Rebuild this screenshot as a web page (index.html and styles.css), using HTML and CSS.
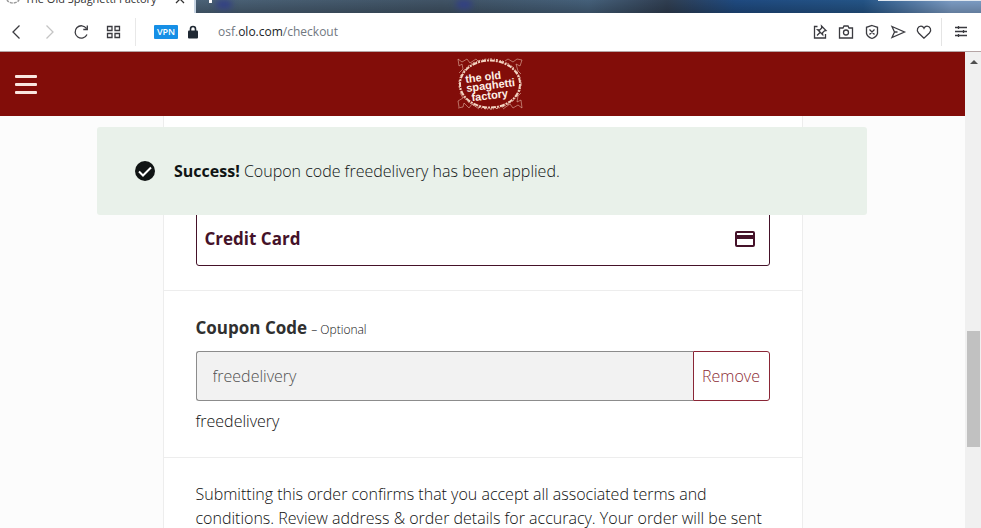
FILE: index.html
```html
<!DOCTYPE html>
<html lang="en">
<head>
<meta charset="utf-8">
<meta name="viewport" content="width=device-width, initial-scale=1">
<title>The Old Spaghetti Factory</title>
<link rel="stylesheet" href="styles.css">
</head>
<body>
<div class="browser">
  <div class="tabs">
    <div class="tab">
      <svg class="tab-icon" width="14" height="10" viewBox="0 0 14 10"><ellipse cx="7" cy="5" rx="6" ry="4" fill="none" stroke="#999" stroke-width="1.500" stroke-dasharray="3 1"/></svg>
      <span class="tab-title">The Old Spaghetti Factory</span>
      <svg class="tab-close" width="10" height="10" viewBox="0 0 10 10"><path d="M1 1l8 8M9 1L1 9" stroke="#333" stroke-width="1.3"/></svg>
    </div>
    <span class="new-tab"></span>
    <span class="shade shade-one"></span>
    <span class="shade shade-two"></span>
    <span class="window-edge"></span>
  </div>
  <div class="toolbar">
    <nav class="nav">
      <button class="tool" type="button" aria-label="Back"><svg width="18" height="18" viewBox="0 0 18 18"><path d="M11.500 2.500L5 9l6.500 6.500" /></svg></button>
      <button class="tool faded" type="button" aria-label="Forward"><svg width="18" height="18" viewBox="0 0 18 18"><path d="M6.500 2.500L13 9l-6.500 6.500"/></svg></button>
      <button class="tool" type="button" aria-label="Reload"><svg width="18" height="18" viewBox="0 0 18 18"><path d="M15 11.500A6.200 6.200 0 1 1 14.500 5.500M15.300 2.500v4h-4"/></svg></button>
      <button class="tool" type="button" aria-label="Speed dial"><svg width="18" height="18" viewBox="0 0 18 18"><path d="M3.500 3.500h4.500v4h-4.500zM11 3.500h4.500v4h-4.500zM3.500 10.500h4.500v4h-4.500zM11 10.500h4.500v4h-4.500z"/></svg></button>
    </nav>
    <div class="address">
      <span class="vpn">VPN</span>
      <svg class="lock" width="12" height="14" viewBox="0 0 12 14"><path d="M3.500 6V4a2.500 2.500 0 0 1 5 0v2" fill="none" stroke="#1f2833" stroke-width="1.600"/><rect x="1" y="5.500" width="10" height="8" rx="1" fill="#1f2833"/></svg>
      <span class="url">osf.<b>olo.com</b>/checkout</span>
    </div>
    <div class="actions">
      <button class="tool" type="button" aria-label="Pin"><svg width="18" height="18" viewBox="0 0 18 18"><path d="M6.500 3.500H3.500v11.500h11v-4M6 12.500l3-3M10.500 3l4.500 4.500-1.500.3-2 2 .2 2-5-5 2 .2 2-2z"/></svg></button>
      <button class="tool" type="button" aria-label="Snapshot"><svg width="18" height="18" viewBox="0 0 18 18"><path d="M2.500 5h3.500l1-2h4l1 2h3.500v10h-13z"/><circle cx="9" cy="9.500" r="2.500"/></svg></button>
      <button class="tool" type="button" aria-label="Ad blocker"><svg width="18" height="18" viewBox="0 0 18 18"><path d="M9 2.500l5.500 1.800v6.200Q13.500 14 9 15.500Q4.500 14 3.500 10.500V4.300zM6.500 6.500l5 5M11.500 6.500l-5 5"/></svg></button>
      <button class="tool" type="button" aria-label="Send"><svg width="18" height="18" viewBox="0 0 18 18"><path d="M3 3.500L15.500 9 3 14.500 5.500 9zM5.500 9h3"/></svg></button>
      <button class="tool" type="button" aria-label="Bookmark"><svg width="18" height="18" viewBox="0 0 18 18"><path d="M9 15.200L3.600 10C0.800 7 3 3.200 6 3.200c1.500 0 2.500 1 3 2 .5-1 1.500-2 3-2 3 0 5.200 3.800 2.400 6.800z"/></svg></button>
      <span class="divider"></span>
      <button class="tool" type="button" aria-label="Easy setup"><svg width="18" height="18" viewBox="0 0 18 18"><path d="M3 4.500h12M3 8.500h12M3 12.500h12M6.500 3v3M11.500 7v3M6.500 11v3"/></svg></button>
    </div>
  </div>
</div>
<div class="viewport">
  <div class="page">
    <header class="header">
      <button class="menu" type="button" aria-label="Menu"><span></span><span></span><span></span></button>
      <svg class="logo" width="68" height="56" viewBox="0 0 68 56" role="img" aria-label="The Old Spaghetti Factory">
        <g fill="none" stroke="#f3d3c0">
          <ellipse cx="34" cy="28" rx="30" ry="23.500" stroke-width="2" stroke-dasharray="5 1 2 1"/>
          <ellipse cx="34" cy="28" rx="31" ry="25" stroke-width="1" stroke-dasharray="2 2 1 1"/>
          <path stroke-width="1" opacity=".5" d="M2 3l4 3 5-3 3 4 6-4 2 2M2 3l1 7 3-2 1 5-4 4M66 4l-5-1-4 3-5-3-3 2M66 4l-2 6-4-2 2 7 3 3M2 52l5-1 1-4 5 5 3-4 7 5M3 51l-1-6 5-3-3-5M66 52l-4-3-5 3-3-4-7 5M66 52l-1-8-4 2 1-6 3-3"/>
        </g>
        <g class="logo-text" transform="rotate(7 34 28)"><text x="10" y="24">the old</text><text x="10" y="33">spaghetti</text><text x="14" y="43">factory</text></g>
      </svg>
    </header>
    <div class="alert" role="status">
      <svg width="20" height="20" viewBox="0 0 20 20"><circle cx="10" cy="10" r="10" fill="#101414"/><path d="M4 10.500l4 4 8-8" fill="none" stroke="#fff" stroke-width="2"/></svg>
      <p><strong>Success!</strong> Coupon code freedelivery has been applied.</p>
    </div>
    <main class="checkout">
      <section class="payment">
        <button class="card-button" type="button"><span>Credit Card</span>
          <svg width="20" height="16" viewBox="0 0 20 16"><path fill="#451229" fill-rule="evenodd" d="M2 0h16a2 2 0 0 1 2 2v12a2 2 0 0 1-2 2H2a2 2 0 0 1-2-2V2a2 2 0 0 1 2-2zM2 2v2h16V2zM2 8v6h16V8z"/></svg>
        </button>
      </section>
      <section class="coupon">
        <label for="coupon"><strong>Coupon Code</strong> <span>– Optional</span></label>
        <div class="field"><input id="coupon" type="text" value="freedelivery" readonly><button type="button">Remove</button></div>
        <p class="applied">freedelivery</p>
      </section>
      <section class="terms"><p>Submitting this order confirms that you accept all associated terms and conditions. Review address &amp; order details for accuracy. Your order will be sent</p></section>
    </main>
  </div>
  <div class="scrollbar"><span class="arrow"></span><span class="thumb"></span></div>
</div>
</body>
</html>
```
FILE: styles.css
```css
* { box-sizing: border-box; }
body { margin: 0; height: 100vh; overflow: hidden; display: flex; flex-direction: column; background: #fcfcfc; color: #101010; font: 300 16px/24px "Open Sans", "Noto Sans", sans-serif; }
p { margin: 0; }
button, input { font: inherit; }

.browser { flex: none; font-size: 13px; }
.tabs { position: relative; height: 13px; overflow: hidden; display: flex; align-items: flex-end; background: linear-gradient(#0000, #0003), linear-gradient(90deg, #4b6277 20%, #405365 45%, #45607a 60%, #303e51 68%, #1f4a80 75%, #245486 88%, #7c9cc4 97%); }
.tab { flex: none; width: 196px; height: 28px; padding: 0 9px 0 6px; display: flex; align-items: center; gap: 5px; background: #fff; border-right: 2px solid #c8d5e3; color: #333; font-weight: 400; font-size: 11px; white-space: nowrap; }
.tab-title { flex: 1; }
.new-tab { width: 3px; height: 3px; margin: 0 0 10px 13px; background: #fff; }
.shade { width: 16px; height: 9px; margin: 0 0 4px 4px; border-radius: 8px; background: #323f86; filter: blur(3px); }
.shade-two { margin-left: 224px; }
.window-edge { width: 103px; height: 2px; margin: 0 0 12px auto; background: #e0e7ef; }
.toolbar { height: 39px; display: flex; align-items: center; background: #fff; border-bottom: 1px solid #b5a5a5; }
.nav { display: flex; gap: 14px; padding: 0 13px 0 8px; border-right: 1px solid #e8e8e8; }
.tool { width: 18px; height: 28px; padding: 0; border: 0; background: none; display: flex; align-items: center; }
.tool svg { fill: none; stroke: #3b3b40; stroke-width: 1.3; }
.faded svg { stroke: #c4c4c4; }
.address { flex: 1; display: flex; align-items: center; padding-left: 18px; }
.vpn { width: 24px; height: 14px; border-radius: 1px; background: #168fe6; color: #fff; font: 600 9px/14px "Open Sans", sans-serif; text-align: center; }
.lock { margin: 0 19px 0 9px; }
.url { color: #71787f; font-weight: 400; font-size: 12px; line-height: 20px; }
.url b { color: #202428; font-weight: 400; }
.actions { display: flex; align-items: center; gap: 8px; padding-right: 11px; }
.divider { width: 1px; height: 28px; margin-right: 2px; background: #e4e4e4; }

.viewport { flex: 1; min-height: 0; display: flex; }
.page { position: relative; flex: 1; min-width: 0; overflow: hidden; }
.header { position: relative; height: 64px; padding: 4px 15px 4px; display: grid; grid-template-columns: 1fr auto 1fr; align-items: center; background: #820d09; }
.menu { width: 22px; padding: 0; border: 0; background: none; display: grid; gap: 5px; }
.menu span { height: 3px; background: #fae6e0; border-radius: 1px; }
.logo { margin-left: 14px; }
.logo-text { fill: #fff0e6; font: 700 11px "Liberation Sans", sans-serif; }
.logo-text { transform: rotate(-7deg); transform-origin: 34px 28px; }
.alert { position: absolute; z-index: 1; top: 75px; left: 97px; right: 98px; min-height: 88px; padding: 0 38px; display: flex; align-items: center; gap: 19px; border-radius: 3px; background: #e9f1ea; color: #101414; }
.alert strong { font-weight: 700; }
.checkout { max-width: 640px; margin: 0 auto; border: 1px solid #ededed; border-top: 0; background: #fff; }
.checkout section { padding: 24px 32px; border-bottom: 1px solid #ededed; }
.payment .card-button { width: 100%; height: 126px; padding: 72px 14px 0 8px; display: flex; align-items: center; justify-content: space-between; border: 1px solid #451229; border-radius: 3px; background: #fff; color: #451229; font-size: 17px; font-weight: 700; }
.coupon label { display: block; margin-bottom: 8px; line-height: 26px; }
.coupon strong { color: #303030; font-size: 17px; font-weight: 700; }
.coupon label span { font-size: 12px; }
.field { display: flex; height: 50px; }
.field input { flex: 1; min-width: 0; padding: 0 16px; border: 1px solid #8c8c8c; border-right: 0; border-radius: 3px 0 0 3px; background: #f2f2f2; color: #505050; outline: 0; }
.field button { width: 77px; padding: 0; border: 1px solid #8a2636; border-radius: 0 3px 3px 0; background: #fff; color: #8a2a33; }
.applied { margin-top: 8px; }

.scrollbar { width: 16px; padding: 8px 0 0 2px; background: #f0f0f0; }
.arrow { display: block; width: 0; margin-left: 3px; border: 4px solid transparent; border-top: 0; border-bottom: 4px solid #505050; }
.thumb { display: block; width: 13px; height: 116px; margin-top: 267px; background: #c1c1c1; }
```
